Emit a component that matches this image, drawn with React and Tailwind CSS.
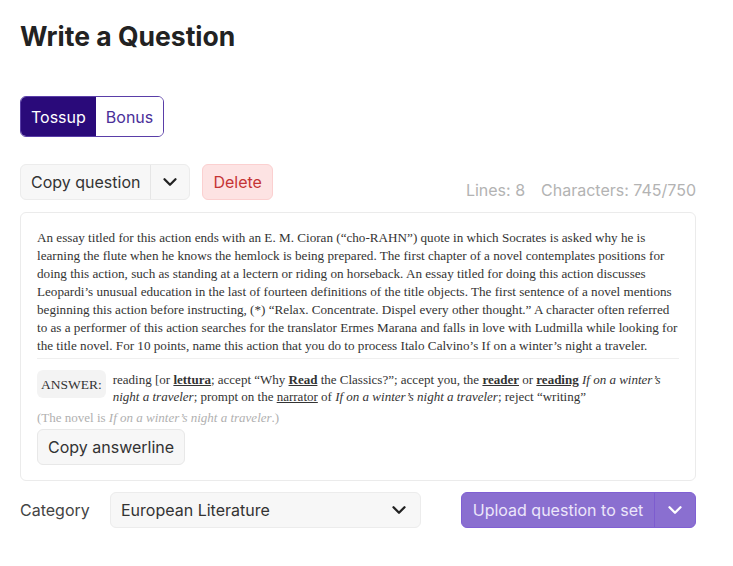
import { ChevronDown } from 'lucide-react'

const questionLines = [
  'An essay titled for this action ends with an E. M. Cioran (“cho-RAHN”) quote in which Socrates is asked why he is',
  'learning the flute when he knows the hemlock is being prepared. The first chapter of a novel contemplates positions for',
  'doing this action, such as standing at a lectern or riding on horseback. An essay titled for doing this action discusses',
  'Leopardi’s unusual education in the last of fourteen definitions of the title objects. The first sentence of a novel mentions',
  'beginning this action before instructing, (*) “Relax. Concentrate. Dispel every other thought.” A character often referred',
  'to as a performer of this action searches for the translator Ermes Marana and falls in love with Ludmilla while looking for',
  'the title novel. For 10 points, name this action that you do to process Italo Calvino’s If on a winter’s night a traveler.',
]

export default function App() {
  return (
    <div className="w-[733px] h-[566px] bg-white pl-5 pr-[37px] pt-5 font-['Inter',sans-serif] text-[#222]">
      <h1 className="text-[26.5px] font-bold leading-8 text-[#222]">Write a Question</h1>

      <div className="mt-[44px] inline-flex rounded-md border border-[#5a3ea8] overflow-hidden h-[41px]">
        <button className="px-[10px] bg-[#2a0a7a] text-white text-[16px]">Tossup</button>
        <button className="px-[10px] bg-white text-[#4a2f99] text-[16px]">Bonus</button>
      </div>

      <div className="mt-[27px] flex items-center">
        <div className="flex h-[36px] rounded-md border border-[#ececec] bg-[#f7f7f7]">
          <button className="px-[10px] text-[16px] text-[#333]">Copy question</button>
          <div className="w-px bg-[#e6e6e6]" />
          <button className="w-[38px] flex items-center justify-center">
            <ChevronDown size={22} strokeWidth={2.5} className="text-[#222]" />
          </button>
        </div>
        <button className="ml-3 h-[36px] px-[10px] rounded-md border border-[#fbd0d0] bg-[#fde3e3] text-[16px] text-[#c53434]">Delete</button>
        <div className="ml-auto self-end leading-[20px] text-[16px] text-[#b3b3b3] flex gap-[16px]">
          <span>Lines: 8</span>
          <span>Characters: 745/750</span>
        </div>
      </div>

      <div className="mt-3 rounded-md border border-[#ebebeb] px-4 pt-[16px] pb-[15px]">
        <div className="font-['Liberation_Serif',serif] text-[13.15px] leading-[18px] text-[#333]">
          {questionLines.map((line, i) => (
            <div key={i} className="whitespace-nowrap">{line}</div>
          ))}
        </div>
        <div className="mt-[3px] border-t border-[#efefef]" />
        <div className="mt-[11px] flex items-start gap-[7px] font-['Liberation_Serif',serif] text-[13px] leading-[17px] text-[#333]">
          <div className="shrink-0 rounded-md bg-[#f3f3f3] px-[4px] h-[28px] flex items-center text-[13.5px]">ANSWER:</div>
          <div className="pt-[1px]">
            <div className="whitespace-nowrap">
              reading [or <b className="underline">lettura</b>; accept “Why <b className="underline">Read</b> the Classics?”; accept you, the <b className="underline">reader</b> or <b className="underline">reading</b> <i>If on a winter’s</i>
            </div>
            <div className="whitespace-nowrap">
              <i>night a traveler</i>; prompt on the <span className="underline">narrator</span> of <i>If on a winter’s night a traveler</i>; reject “writing”
            </div>
          </div>
        </div>
        <p className="mt-[4px] font-['Liberation_Serif',serif] text-[13px] leading-[18px] text-[#b0b0b0]">
          (The novel is <i>If on a winter’s night a traveler</i>.)
        </p>
        <button className="mt-[2px] h-[36px] px-[10px] rounded-md border border-[#e8e8e8] bg-[#f7f7f7] text-[16px] text-[#333]">Copy answerline</button>
      </div>

      <div className="mt-[11px] flex items-center">
        <span className="w-[90px] text-[16px] text-[#444]">Category</span>
        <div className="w-[311px] h-[36px] rounded-md border border-[#ececec] bg-[#f7f7f7] flex items-center px-[10px]">
          <span className="text-[16px] text-[#333]">European Literature</span>
          <ChevronDown size={22} strokeWidth={2.5} className="ml-auto text-[#222]" />
        </div>
        <div className="ml-auto flex h-[36px] rounded-md border border-[#8060d4] bg-[#8a6fd0]">
          <button className="w-[192px] text-[16px] text-[#ece6fa]">Upload question to set</button>
          <div className="w-px bg-[#7d5ccf]" />
          <button className="w-[40px] flex items-center justify-center">
            <ChevronDown size={22} strokeWidth={2.5} className="text-white" />
          </button>
        </div>
      </div>
    </div>
  )
}
